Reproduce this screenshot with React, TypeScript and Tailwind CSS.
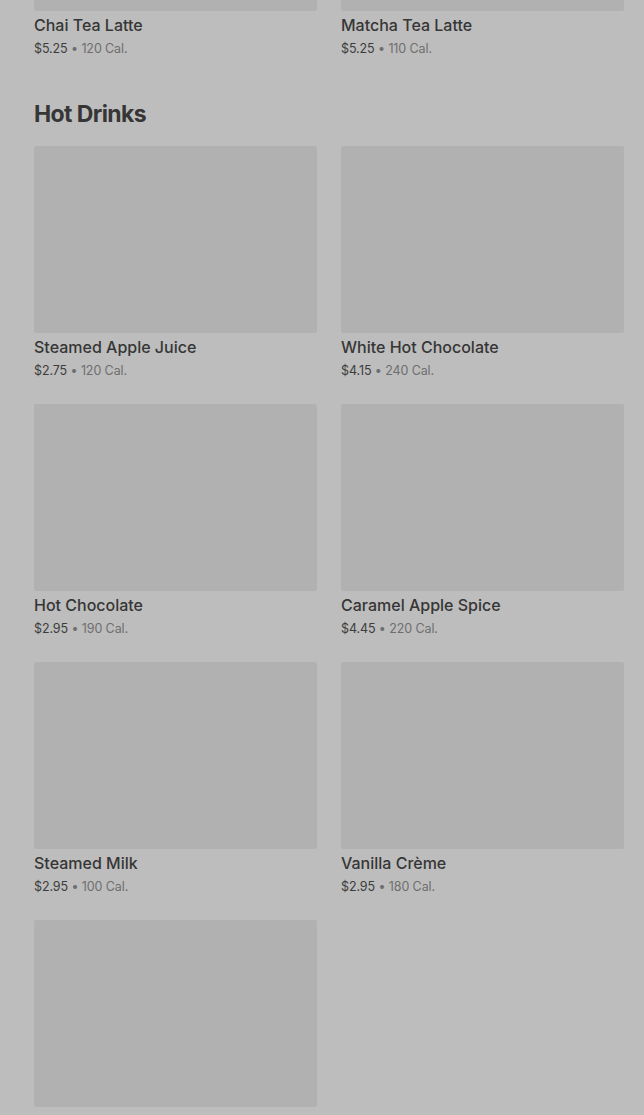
type Item = { name: string; price: string; cal: string };

const prev: Item[] = [
  { name: "Chai Tea Latte", price: "$5.25", cal: "120 Cal." },
  { name: "Matcha Tea Latte", price: "$5.25", cal: "110 Cal." },
];

const hotDrinks: Item[] = [
  { name: "Steamed Apple Juice", price: "$2.75", cal: "120 Cal." },
  { name: "White Hot Chocolate", price: "$4.15", cal: "240 Cal." },
  { name: "Hot Chocolate", price: "$2.95", cal: "190 Cal." },
  { name: "Caramel Apple Spice", price: "$4.45", cal: "220 Cal." },
  { name: "Steamed Milk", price: "$2.95", cal: "100 Cal." },
  { name: "Vanilla Crème", price: "$2.95", cal: "180 Cal." },
  { name: "Salted Caramel Hot Chocolate", price: "$4.45", cal: "320 Cal." },
];

const MenuCard = ({ item }: { item: Item }) => (
  <div className="flex flex-col">
    <div className="h-[187px] w-full rounded-[2px] bg-[#b1b1b1]" />
    <div className="mt-1 text-[16px] leading-5 font-medium text-[#363636]">{item.name}</div>
    <div className="mt-[4px] text-[12.5px] leading-5 tracking-[-0.1px] text-[#3c3c3c]">
      {item.price}
      <span className="text-[#6e6e6e]"> • {item.cal}</span>
    </div>
  </div>
);

export default function App() {
  return (
    <div
      className="h-[1115px] w-[644px] overflow-hidden bg-[#bdbdbd]"
      style={{ fontFamily: "Inter, 'Liberation Sans', sans-serif" }}
    >
      <div className="-mt-[176px] pl-[34px] pr-[20px]">
        <div className="grid grid-cols-2 gap-x-6 gap-y-[23px]">
          {prev.map((it) => (
            <MenuCard key={it.name} item={it} />
          ))}
        </div>

        <h2 className="mt-[39px] mb-[16px] text-[23px] leading-8 font-bold tracking-[-0.6px] text-[#363636]">
          Hot Drinks
        </h2>

        <div className="grid grid-cols-2 gap-x-6 gap-y-[23px]">
          {hotDrinks.map((it) => (
            <MenuCard key={it.name} item={it} />
          ))}
        </div>
      </div>
    </div>
  );
}
